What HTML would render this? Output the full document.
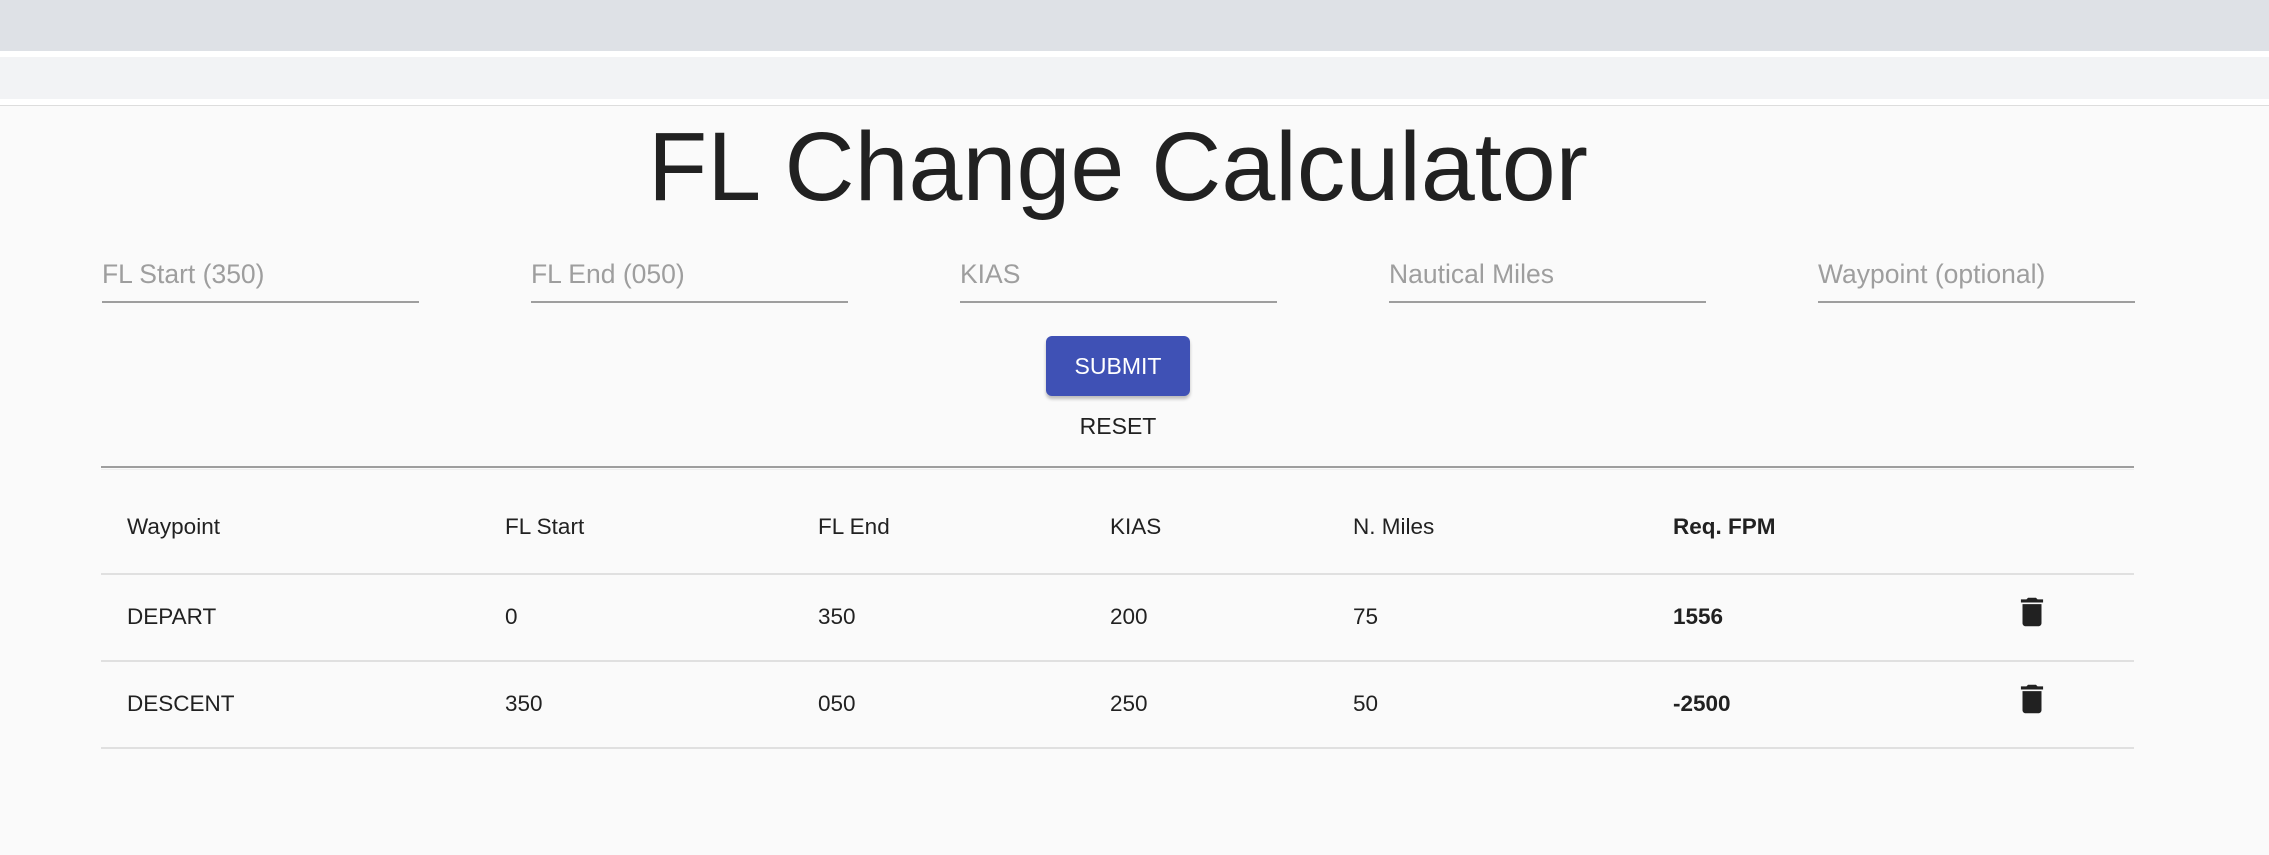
<!DOCTYPE html>
<html><head><meta charset="utf-8"><style>
*{margin:0;padding:0;box-sizing:border-box}
body{width:2269px;height:855px;background:#fafafa;font-family:"Liberation Sans",sans-serif;position:relative;overflow:hidden;color:#212121}
.a{position:absolute}
.ph{font-size:26.5px;color:#9e9e9e;line-height:26px}
.ul{height:2px;background:#9e9e9e}
.t{font-size:22.5px;line-height:22px;position:absolute}
.hl{position:absolute;left:101px;width:2033px;height:2px;background:#e0e0e0}
</style></head><body>
<div class="a" style="left:0;top:0;width:2269px;height:51px;background:#dee1e6"></div>
<div class="a" style="left:0;top:51px;width:2269px;height:6px;background:#fff"></div>
<div class="a" style="left:0;top:57px;width:2269px;height:42px;background:#f2f3f5"></div>
<div class="a" style="left:0;top:99px;width:2269px;height:6px;background:#fff"></div>
<div class="a" style="left:0;top:105px;width:2269px;height:1px;background:#ddd"></div>
<div class="a" style="left:0;width:2236px;top:107px;text-align:center;font-size:97px;line-height:120px;color:#212121">FL Change Calculator</div>

<div class="a ph" style="left:102px;top:261px">FL Start (350)</div>
<div class="a ul" style="left:102px;top:301px;width:317px"></div>
<div class="a ph" style="left:531px;top:261px">FL End (050)</div>
<div class="a ul" style="left:531px;top:301px;width:317px"></div>
<div class="a ph" style="left:960px;top:261px">KIAS</div>
<div class="a ul" style="left:960px;top:301px;width:317px"></div>
<div class="a ph" style="left:1389px;top:261px">Nautical Miles</div>
<div class="a ul" style="left:1389px;top:301px;width:317px"></div>
<div class="a ph" style="left:1818px;top:261px">Waypoint (optional)</div>
<div class="a ul" style="left:1818px;top:301px;width:317px"></div>

<div class="a" style="left:1046px;top:336px;width:144px;height:60px;background:#3f51b5;border-radius:6px;box-shadow:0 3px 3px rgba(0,0,0,.25);color:#fff;font-size:23px;line-height:60px;text-align:center">SUBMIT</div>
<div class="a" style="left:1046px;top:414px;width:144px;text-align:center;font-size:23px;line-height:24px;color:#212121">RESET</div>

<div class="a" style="left:101px;top:466px;width:2033px;height:2px;background:#9e9e9e"></div>
<div class="hl" style="top:469px;height:1px;background:#eee"></div>
<div class="t" style="left:127px;top:516px">Waypoint</div>
<div class="t" style="left:505px;top:516px">FL Start</div>
<div class="t" style="left:818px;top:516px">FL End</div>
<div class="t" style="left:1110px;top:516px">KIAS</div>
<div class="t" style="left:1353px;top:516px">N. Miles</div>
<div class="t" style="left:1673px;top:516px;font-weight:bold">Req. FPM</div>
<div class="hl" style="top:573px"></div>

<div class="t" style="left:127px;top:606px">DEPART</div>
<div class="t" style="left:505px;top:606px">0</div>
<div class="t" style="left:818px;top:606px">350</div>
<div class="t" style="left:1110px;top:606px">200</div>
<div class="t" style="left:1353px;top:606px">75</div>
<div class="t" style="left:1673px;top:606px;font-weight:bold">1556</div>
<svg class="a" style="left:2013px;top:593px" width="38" height="38" viewBox="0 0 24 24"><path fill="#212121" d="M6 19c0 1.1.9 2 2 2h8c1.1 0 2-.9 2-2V7H6v12zM19 4h-3.5l-1-1h-5l-1 1H5v2h14V4z"/></svg>
<div class="hl" style="top:660px"></div>

<div class="t" style="left:127px;top:693px">DESCENT</div>
<div class="t" style="left:505px;top:693px">350</div>
<div class="t" style="left:818px;top:693px">050</div>
<div class="t" style="left:1110px;top:693px">250</div>
<div class="t" style="left:1353px;top:693px">50</div>
<div class="t" style="left:1673px;top:693px;font-weight:bold">-2500</div>
<svg class="a" style="left:2013px;top:680px" width="38" height="38" viewBox="0 0 24 24"><path fill="#212121" d="M6 19c0 1.1.9 2 2 2h8c1.1 0 2-.9 2-2V7H6v12zM19 4h-3.5l-1-1h-5l-1 1H5v2h14V4z"/></svg>
<div class="hl" style="top:747px"></div>
</body></html>
